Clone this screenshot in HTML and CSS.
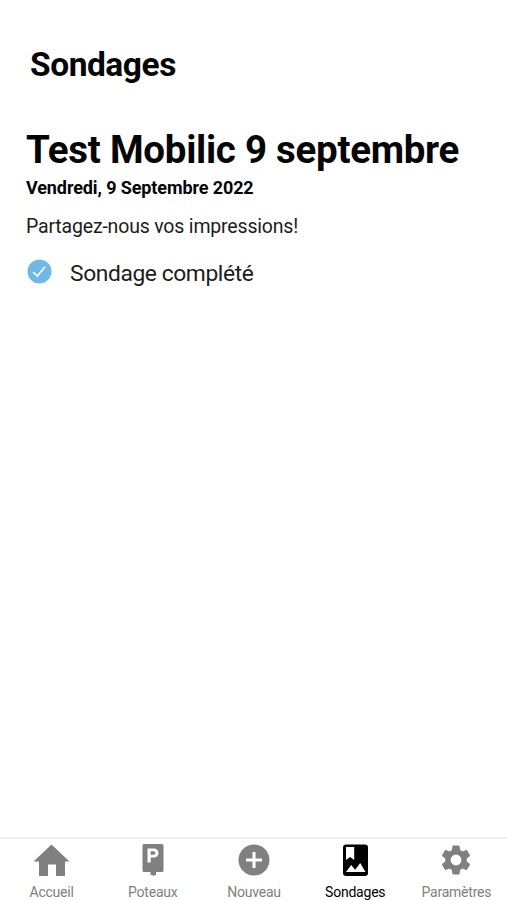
FILE: index.html
```html
<!DOCTYPE html>
<html lang="fr">
<head>
<meta charset="utf-8">
<title>Sondages</title>
<link rel="stylesheet" href="styles.css">
</head>
<body>
<main class="content">
  <h1 class="page-title"><span>Sondages</span></h1>
  <section class="survey">
    <h2 class="survey-title"><span>Test Mobilic 9 septembre</span></h2>
    <p class="survey-date"><span>Vendredi, 9 Septembre 2022</span></p>
    <p class="survey-text"><span>Partagez-nous vos impressions!</span></p>
    <div class="status">
      <svg class="check" viewBox="0 0 25 25"><circle cx="12.5" cy="12.5" r="12" fill="#70b8e6"/><path d="M6.200 13l4.200 4L18 7.800" fill="none" stroke="#fff" stroke-width="1.700"/></svg>
      <span>Sondage complété</span>
    </div>
  </section>
</main>
<nav class="tabs">
  <a class="tab"><svg viewBox="0 0 36 36"><path d="M17.500 2.500L35.500 19.500H31V34h-9V22.500h-8V34H5V19.500H-.5z"/></svg><span>Accueil</span></a>
  <a class="tab"><svg viewBox="0 0 36 36"><path fill-rule="evenodd" d="M9 2h18q1.500 0 1.500 1.500v25q0 1.500-1.500 1.500h-6v3h-1l-1.500 1-1.500-1h-1.500v-3H9q-1.500 0-1.500-1.500v-25Q7.500 2 9 2zM12.500 6.500v14h3.200v-5H19a4.500 4.500 0 0 0 0-9zM15.700 9.200h3a1.800 1.800 0 0 1 0 3.600h-3z"/></svg><span>Poteaux</span></a>
  <a class="tab"><svg viewBox="0 0 36 36"><circle cx="18" cy="18" r="15.500"/><path d="M18 10v16M10 18h16" stroke="#fff" stroke-width="3"/></svg><span>Nouveau</span></a>
  <a class="tab active"><svg viewBox="0 0 36 36"><rect x="6" y="2.500" width="25" height="31.500" rx="3"/><path fill="#fff" d="M9 5h8.200v13l-4.100-3L9 18zM9 30l5.200-7 4 4.800L23.200 21 28.500 30z"/></svg><span>Sondages</span></a>
  <a class="tab"><svg viewBox="0 0 24 24"><path d="M19.140 12.940c.04-.3.06-.61.06-.94s-.02-.64-.07-.94l2.030-1.580c.18-.14.23-.41.12-.61l-1.920-3.320c-.12-.22-.37-.29-.59-.22l-2.390.96c-.5-.38-1.030-.7-1.620-.94l-.36-2.540c-.04-.24-.24-.41-.48-.41h-3.840c-.24 0-.43.17-.47.41l-.36 2.540c-.59.24-1.130.57-1.620.94l-2.390-.96c-.22-.08-.47 0-.59.22L2.740 8.870c-.12.21-.08.47.12.61l2.030 1.580c-.05.3-.09.63-.09.94s.02.64.07.94l-2.030 1.580c-.18.14-.23.41-.12.61l1.920 3.320c.12.22.37.29.59.22l2.390-.96c.5.38 1.030.7 1.620.94l.36 2.540c.05.24.24.41.48.41h3.840c.24 0 .44-.17.47-.41l.36-2.540c.59-.24 1.130-.56 1.620-.94l2.390.96c.22.08.47 0 .59-.22l1.920-3.320c.12-.22.07-.47-.12-.61zM12 15.600A3.600 3.600 0 1 1 12 8.400a3.600 3.600 0 0 1 0 7.200z"/></svg><span>Paramètres</span></a>
</nav>
</body>
</html>
```
FILE: styles.css
```css
* { box-sizing: border-box; }
body { margin: 0; height: 900px; display: flex; flex-direction: column; background: #fff; color: #050505; font-family: Roboto, sans-serif; overflow: hidden; }
h1, h2, p { margin: 0; }
.content { flex: 1; padding: 43px 26px 0; }
.page-title { padding-left: 4px; font-size: 33.500px; line-height: 44px; font-weight: 700; letter-spacing: -.45px; }
.survey { padding-top: 38px; }
.survey-title { font-size: 38.500px; line-height: 50px; font-weight: 700; letter-spacing: -.28px; white-space: nowrap; }
.survey-date { font-size: 18px; line-height: 26px; font-weight: 700; letter-spacing: -.11px; }
.survey-text { margin-top: 13px; font-size: 19.500px; line-height: 26px; letter-spacing: -.18px; color: #1c1c1c; }
.status { display: flex; align-items: center; gap: 18px; margin-top: 18px; padding-left: 1px; font-size: 22.800px; line-height: 32px; letter-spacing: -.4px; color: #1c1c1c; }
.check { width: 25px; height: 25px; margin-top: -5px; }
.tabs { height: 63px; display: grid; grid-template-columns: repeat(5, 1fr); padding-left: 1px; border-top: 2px solid #f0f0f0; }
.tab { display: flex; flex-direction: column; align-items: center; padding-top: 3px; color: #808080; font-size: 14px; line-height: 20px; letter-spacing: -.22px; }
.tab svg { width: 36px; height: 36px; fill: currentColor; margin-bottom: 4px; overflow: visible; }
.active { color: #000; }
```
